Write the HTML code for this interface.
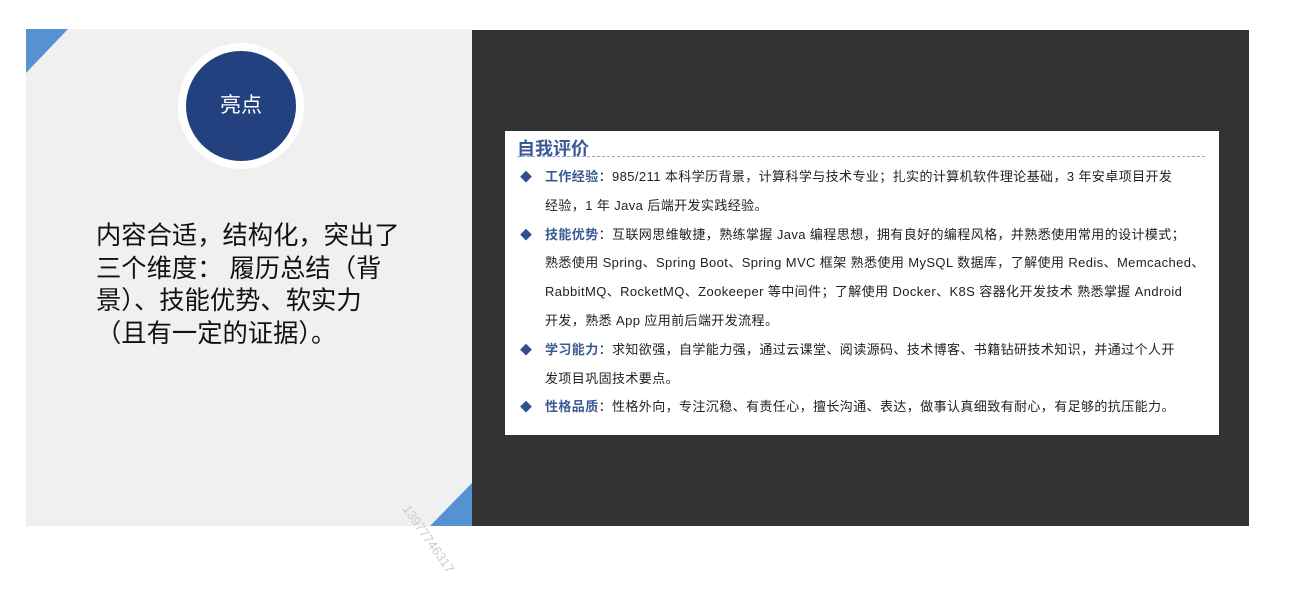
<!DOCTYPE html>
<html><head><meta charset="utf-8"><style>
body{margin:0;width:1291px;height:607px;background:#fff;position:relative;overflow:hidden;font-family:"Liberation Sans","Noto Sans CJK SC",sans-serif}
.l{position:absolute;left:26px;top:29px;width:446px;height:497px;background:#f0f0f0}
.d{position:absolute;left:472px;top:30px;width:777px;height:496px;background:#333}
.c{position:absolute;left:505px;top:131px;width:714px;height:304px;background:#fff}
.ring{position:absolute;left:178px;top:43px;width:126px;height:126px;border-radius:50%;background:#fff}
.in{position:absolute;left:8px;top:8px;width:110px;height:110px;border-radius:50%;background:#23417e;color:#fff;font-size:21px;line-height:110px;text-align:center}
.lt{position:absolute;left:96px;top:220px;font-size:25.3px;line-height:32.5px;color:#111;white-space:nowrap}
.t{position:absolute;left:12px;top:4px;font-size:18px;font-weight:bold;color:#3a5a96}
.dash{position:absolute;left:12px;top:25px;width:688px;border-top:1px dashed #8ea8d4}
.p{position:absolute;left:40px;top:32px;font-size:13px;letter-spacing:0.4px;line-height:28.8px;color:#222;white-space:nowrap}
.b{position:absolute;left:-25px;color:#2f4f8f;font-size:12px;letter-spacing:0}
.h{color:#3a5a96;font-weight:bold}
.wm{position:absolute;left:412px;top:502px;transform:rotate(55deg);transform-origin:left top;color:#ccc;font-size:13px}
</style></head><body>
<div class="l"></div>
<svg style="position:absolute;left:0;top:0" width="1291" height="607"><polygon points="26,29 68,29 26,73" fill="#5591d3"/></svg>
<div class="d"></div>
<svg style="position:absolute;left:0;top:0" width="1291" height="607"><polygon points="472,483 472,526 430,526" fill="#5591d3"/></svg>
<div class="ring"><div class="in">亮点</div></div>
<div class="lt">内容合适，结构化，突出了<br>三个维度： 履历总结（背<br>景）、技能优势、软实力<br>（且有一定的证据）。</div>
<div class="c">
<div class="t">自我评价</div><div class="dash"></div>
<div class="p">
<div style="position:relative"><span class="b">◆</span><span class="h">工作经验</span>：985/211 本科学历背景，计算科学与技术专业；扎实的计算机软件理论基础，3 年安卓项目开发<br>经验，1 年 Java 后端开发实践经验。</div>
<div style="position:relative"><span class="b">◆</span><span class="h">技能优势</span>：互联网思维敏捷，熟练掌握 Java 编程思想，拥有良好的编程风格，并熟悉使用常用的设计模式；<br>熟悉使用 Spring、Spring Boot、Spring MVC 框架 熟悉使用 MySQL 数据库，了解使用 Redis、Memcached、<br>RabbitMQ、RocketMQ、Zookeeper 等中间件；了解使用 Docker、K8S 容器化开发技术 熟悉掌握 Android<br>开发，熟悉 App 应用前后端开发流程。</div>
<div style="position:relative"><span class="b">◆</span><span class="h">学习能力</span>：求知欲强，自学能力强，通过云课堂、阅读源码、技术博客、书籍钻研技术知识，并通过个人开<br>发项目巩固技术要点。</div>
<div style="position:relative"><span class="b">◆</span><span class="h">性格品质</span>：性格外向，专注沉稳、有责任心，擅长沟通、表达，做事认真细致有耐心，有足够的抗压能力。</div>
</div></div>
<div class="wm">13977746317</div>
</body></html>
